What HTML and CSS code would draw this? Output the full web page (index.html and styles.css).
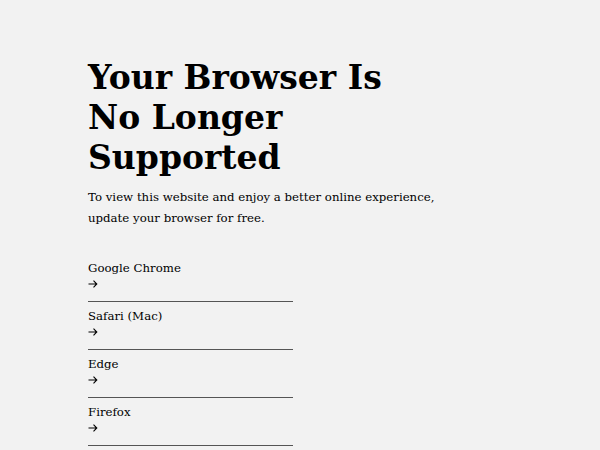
FILE: index.html
```html
<!DOCTYPE html>
<html>
<head>
  <title>Browser Not Supported</title>
  <link rel="stylesheet" href="styles.css">
</head>
<body>
  <div class="page">
    <h1>Your Browser Is<br>No Longer<br>Supported</h1>
    <p class="intro">To view this website and enjoy a better online experience,<br>update your browser for free.</p>

    <ul class="browsers">
      <li>
        <a href="#">
          <span class="name">Google Chrome</span>
          <span class="arrow"><svg width="10" height="8" viewBox="0 0 10 8"><path d="M0.5 4H9M5.5 0.7L8.8 4L5.5 7.3" fill="none" stroke="#000" stroke-width="1.1"/></svg></span>
        </a>
      </li>
      <li>
        <a href="#">
          <span class="name">Safari (Mac)</span>
          <span class="arrow"><svg width="10" height="8" viewBox="0 0 10 8"><path d="M0.5 4H9M5.5 0.7L8.8 4L5.5 7.3" fill="none" stroke="#000" stroke-width="1.1"/></svg></span>
        </a>
      </li>
      <li>
        <a href="#">
          <span class="name">Edge</span>
          <span class="arrow"><svg width="10" height="8" viewBox="0 0 10 8"><path d="M0.5 4H9M5.5 0.7L8.8 4L5.5 7.3" fill="none" stroke="#000" stroke-width="1.1"/></svg></span>
        </a>
      </li>
      <li>
        <a href="#">
          <span class="name">Firefox</span>
          <span class="arrow"><svg width="10" height="8" viewBox="0 0 10 8"><path d="M0.5 4H9M5.5 0.7L8.8 4L5.5 7.3" fill="none" stroke="#000" stroke-width="1.1"/></svg></span>
        </a>
      </li>
    </ul>
  </div>
</body>
</html>
```

FILE: styles.css
```css
html, body {
  margin: 0;
  background: #f2f2f2;
  color: #000;
  font-family: "DejaVu Serif", serif;
}
.page {
  padding: 58px 88px 0;
}
h1 {
  margin: 0;
  font-size: 33px;
  line-height: 40px;
  font-weight: bold;
}
.intro {
  margin: 9px 0 0;
  font-size: 11.75px;
  line-height: 21px;
}
.browsers {
  list-style: none;
  margin: 25px 0 0;
  padding: 0;
  width: 205px;
}
.browsers li {
  border-bottom: 1px solid #555;
  padding: 7px 0 10px;
}
.browsers a {
  display: flex;
  flex-direction: column;
  gap: 2px;
  color: #000;
  text-decoration: none;
  font-size: 11.75px;
  line-height: 14px;
}
.arrow {
  display: flex;
  align-items: center;
  height: 14px;
}
```
